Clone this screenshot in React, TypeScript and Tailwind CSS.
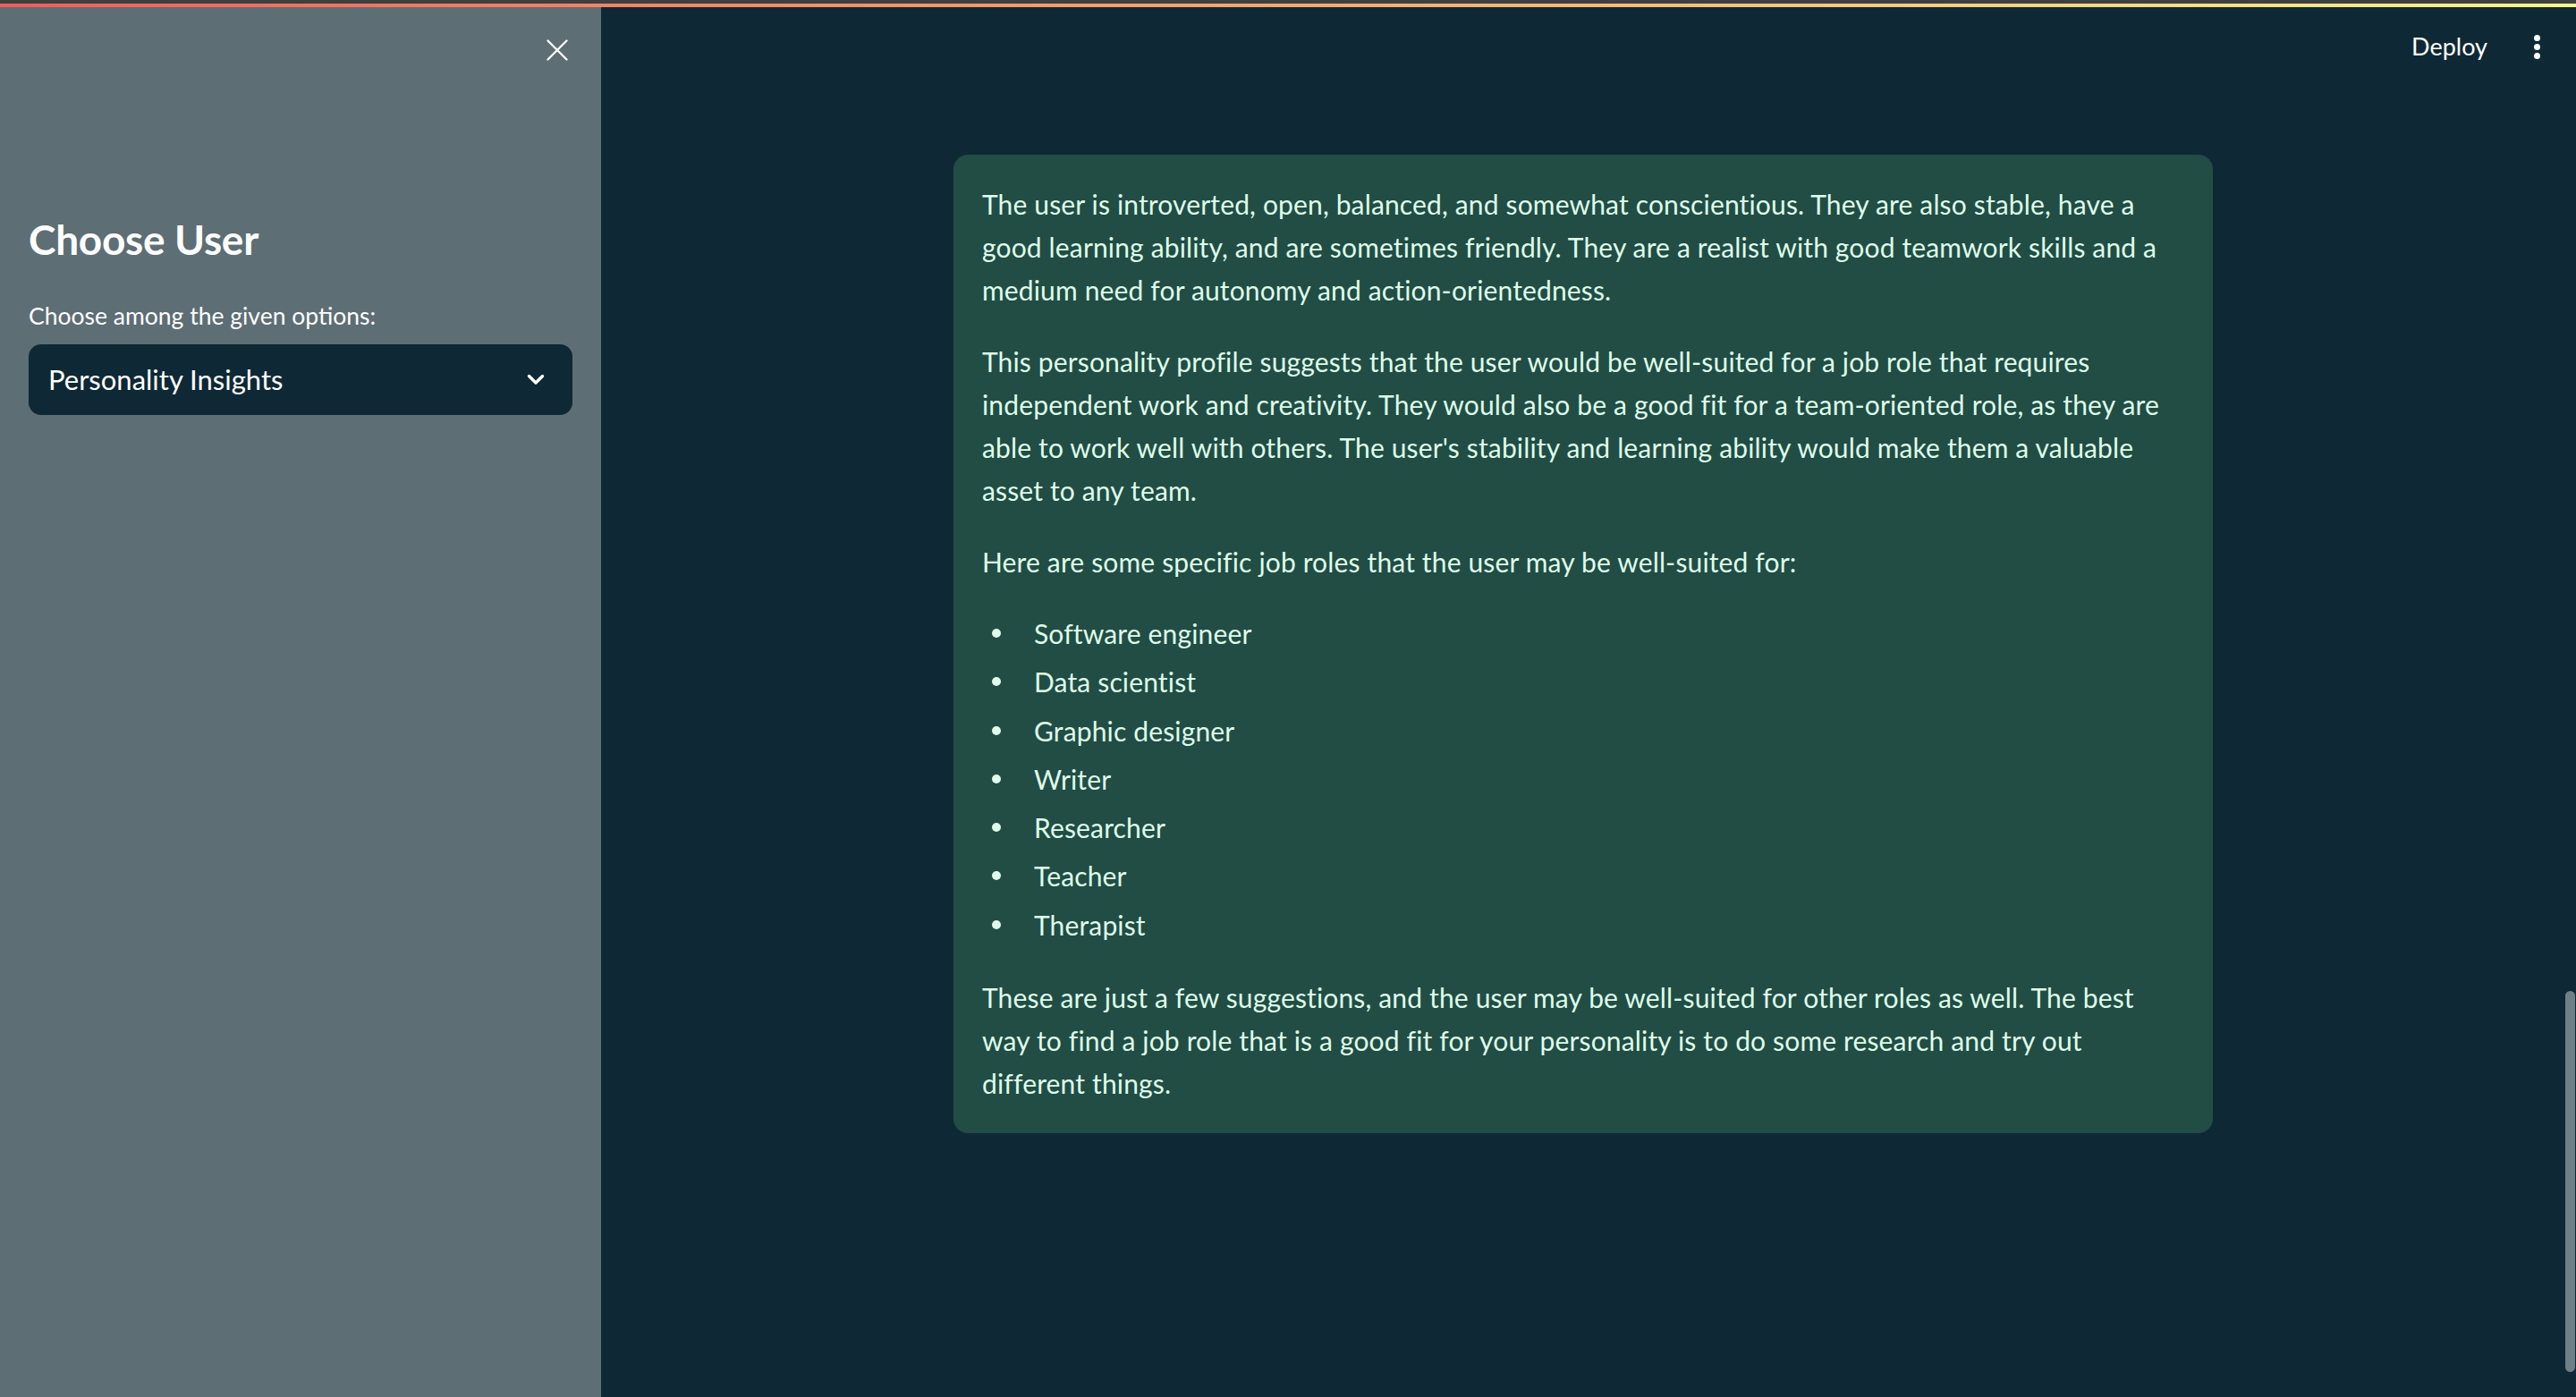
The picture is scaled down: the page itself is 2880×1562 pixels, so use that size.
import React from "react";

const font = { fontFamily: "Lato, 'Open Sans', sans-serif" };

const jobs = [
  "Software engineer",
  "Data scientist",
  "Graphic designer",
  "Writer",
  "Researcher",
  "Teacher",
  "Therapist",
];

export default function App() {
  return (
    <div
      className="relative flex flex-col h-[1562px] w-[2880px] overflow-hidden bg-[#0e2935] font-['Lato',sans-serif]"
      style={font}
    >
      {/* top bars */}
      <div className="h-[4px] w-full bg-[#3d3f41]" />
      <div className="h-[4px] w-full bg-gradient-to-r from-[#ef5f5a] via-[#f8a873] to-[#fdf48a]" />

      <div className="flex flex-1 min-h-0">
        {/* Sidebar */}
        <aside className="w-[672px] shrink-0 bg-[#5d6e75] flex flex-col px-[32px]">
          <div className="flex justify-end pt-[36px] pr-[5px]">
            <svg width="24" height="24" viewBox="0 0 24 24" className="block">
              <path d="M1.5 1.5 L22.5 22.5 M22.5 1.5 L1.5 22.5" stroke="#ffffff" strokeWidth="2.3" strokeLinecap="round" fill="none" />
            </svg>
          </div>
          <h2 className="mt-[172px] text-[46px] leading-[56px] font-bold text-white tracking-[-0.3px]">
            Choose User
          </h2>
          <div className="mt-[40px] text-[26.5px] leading-[34px] text-white">
            Choose among the given options:
          </div>
          <div className="mt-[15px] h-[79px] w-[608px] rounded-[14px] bg-[#0e2935] flex items-center justify-between pl-[22px] pr-[31px]">
            <span className="text-[31px] text-white">Personality Insights</span>
            <svg width="20" height="13" viewBox="0 0 20 13" className="block">
              <path d="M2.5 2.5 L10 10 L17.5 2.5" stroke="#ffffff" strokeWidth="3.4" strokeLinecap="round" strokeLinejoin="round" fill="none" />
            </svg>
          </div>
        </aside>

        {/* Main */}
        <main className="flex-1 flex flex-col pr-[12px]">
          <header className="h-[88px] flex items-center justify-end gap-[52px] pr-[28px]">
            <span className="text-[27px] text-white">Deploy</span>
            <div className="flex flex-col items-center gap-[3px]">
              <span className="block w-[7px] h-[7px] rounded-full bg-white" />
              <span className="block w-[7px] h-[7px] rounded-full bg-white" />
              <span className="block w-[7px] h-[7px] rounded-full bg-white" />
            </div>
          </header>
          <div className="flex justify-center pt-[77px]">
            <div className="w-[1408px] rounded-[16px] bg-[#214d45] px-[32px] pt-[31px] pb-[32px] text-[#dffde9] text-[30px] leading-[48px] tracking-[0.15px]">
              <p className="mb-[32px]">
                The user is introverted, open, balanced, and somewhat conscientious. They are also stable, have a good learning ability, and are sometimes friendly. They are a realist with good teamwork skills and a medium need for autonomy and action-orientedness.
              </p>
              <p className="mb-[32px]">
                This personality profile suggests that the user would be well-suited for a job role that requires independent work and creativity. They would also be a good fit for a team-oriented role, as they are able to work well with others. The user's stability and learning ability would make them a valuable asset to any team.
              </p>
              <p className="mb-[32px]">
                Here are some specific job roles that the user may be well-suited for:
              </p>
              <ul className="mb-[33px] flex flex-col gap-[6.3px]">
                {jobs.map((j) => (
                  <li key={j} className="flex items-center">
                    <span className="w-[58px] shrink-0 flex">
                      <span className="ml-[11px] block w-[10px] h-[10px] rounded-full bg-[#dffde9]" />
                    </span>
                    <span>{j}</span>
                  </li>
                ))}
              </ul>
              <p>
                These are just a few suggestions, and the user may be well-suited for other roles as well. The best way to find a job role that is a good fit for your personality is to do some research and try out different things.
              </p>
            </div>
          </div>
        </main>
      </div>

      {/* scrollbar thumb */}
      <div className="absolute right-[1px] top-[1108px] h-[426px] w-[11px] rounded-full bg-[#6e7f86]" />
    </div>
  );
}
